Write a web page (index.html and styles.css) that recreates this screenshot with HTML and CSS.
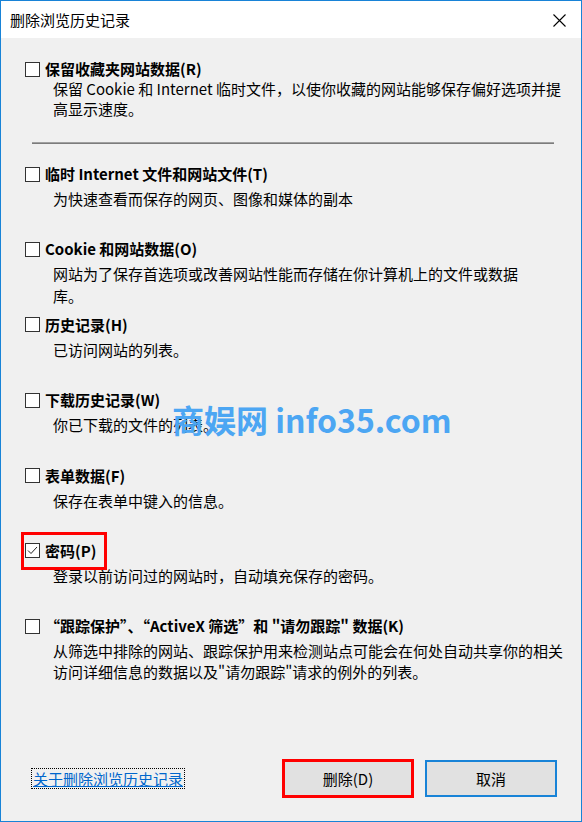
FILE: index.html
```html
<!DOCTYPE html>
<html lang="zh-CN">
<head>
  <meta charset="UTF-8">
  <meta name="viewport" content="width=device-width, initial-scale=1.0">
  <title>删除浏览历史记录</title>
  <link rel="stylesheet" href="styles.css">
</head>
<body>
  <div class="dialog">
    <div class="titlebar">
      <span class="title">删除浏览历史记录</span>
      <svg class="close" width="13" height="13" viewBox="0 0 13 13">
        <path d="M0.5 0.5 L12.5 12.5 M12.5 0.5 L0.5 12.5" stroke="#000" stroke-width="1.1" fill="none"/>
      </svg>
    </div>

    <div class="content">
      <div class="keep">
        <div class="row">
          <span class="box"></span>
          <span class="label">保留收藏夹网站数据(R)</span>
        </div>
        <p class="desc">保留 Cookie 和 Internet 临时文件，以使你收藏的网站能够保存偏好选项并提高显示速度。</p>
      </div>

      <div class="sep"></div>

      <div class="item">
        <div class="row">
          <span class="box"></span>
          <span class="label">临时 Internet 文件和网站文件(T)</span>
        </div>
        <p class="desc">为快速查看而保存的网页、图像和媒体的副本</p>
      </div>
      <div class="item">
        <div class="row">
          <span class="box"></span>
          <span class="label">Cookie 和网站数据(O)</span>
        </div>
        <p class="desc narrow">网站为了保存首选项或改善网站性能而存储在你计算机上的文件或数据库。</p>
      </div>
      <div class="item">
        <div class="row">
          <span class="box"></span>
          <span class="label">历史记录(H)</span>
        </div>
        <p class="desc">已访问网站的列表。</p>
      </div>
      <div class="item">
        <div class="row">
          <span class="box"></span>
          <span class="label">下载历史记录(W)</span>
        </div>
        <p class="desc">你已下载的文件的列表。</p>
      </div>
      <div class="item">
        <div class="row">
          <span class="box"></span>
          <span class="label">表单数据(F)</span>
        </div>
        <p class="desc">保存在表单中键入的信息。</p>
      </div>
      <div class="item">
        <div class="row marked">
          <span class="box">
            <svg width="13" height="13" viewBox="0 0 13 13">
              <path d="M2 6.5 L5 9.5 L11 3" stroke="#222" stroke-width="1" fill="none"/>
            </svg>
          </span>
          <span class="label">密码(P)</span>
        </div>
        <p class="desc">登录以前访问过的网站时，自动填充保存的密码。</p>
      </div>
      <div class="item">
        <div class="row">
          <span class="box"></span>
          <span class="label">“跟踪保护”、“ActiveX 筛选”和 "请勿跟踪" 数据(K)</span>
        </div>
        <p class="desc">从筛选中排除的网站、跟踪保护用来检测站点可能会在何处自动共享你的相关访问详细信息的数据以及"请勿跟踪"请求的例外的列表。</p>
      </div>
    </div>

    <div class="footer">
      <a class="about" href="#">关于删除浏览历史记录</a>
      <div class="buttons">
        <button class="btn btn-delete">删除(D)</button>
        <button class="btn btn-cancel">取消</button>
      </div>
    </div>

    <div class="watermark">商娱网 info35.com</div>
  </div>
</body>
</html>
```

FILE: styles.css
```css
*{
  margin: 0;
  padding: 0;
  box-sizing: border-box;
}
body{
  background: #f0f0f0;
  font-family: "Noto Sans CJK SC", "Liberation Sans", sans-serif;
  color: #000;
}
.dialog{
  position: relative;
  width: 582px;
  height: 822px;
  border: 1px solid #1883d7;
  background: #f0f0f0;
  display: flex;
  flex-direction: column;
}
.titlebar{
  height: 37px;
  background: #fff;
  display: flex;
  align-items: center;
  justify-content: space-between;
  padding: 0 15px 0 9px;
}
.title{
  font-size: 15px;
  line-height: 20px;
}
.close{
  margin-top: 1px;
}
.content{
  flex: 1;
  padding: 20px 0 0 24px;
}
.row{
  display: flex;
  align-items: center;
  height: 22px;
}
.box{
  flex: none;
  width: 15px;
  height: 15px;
  border: 1px solid #333;
  background: #fff;
  margin-right: 5px;
  display: flex;
  align-items: center;
  justify-content: center;
}
.box svg{
  display: block;
  flex: none;
}
.label{
  font-size: 15px;
  font-weight: bold;
  line-height: 22px;
}
.desc{
  font-size: 15px;
  line-height: 21px;
  padding-left: 28px;
  padding-right: 10px;
}
.keep .desc{
  margin-top: -1px;
  line-height: 20px;
}
.desc.narrow{
  padding-right: 50px;
  line-height: 22px;
}
.item .desc{
  margin-top: 3px;
}
.sep{
  margin: 23px 27px 19px 7px;
  height: 2px;
  border-top: 1px solid #a0a0a0;
  border-bottom: 1px solid #7c7c7c;
}
.item{
  height: 75.4px;
}
.marked{
  position: relative;
}
.marked::after{
  content: "";
  position: absolute;
  left: -4px;
  top: -8px;
  width: 80px;
  height: 32px;
  border: 3px solid #ff0000;
}
.footer{
  height: 86px;
  display: flex;
  align-items: center;
  justify-content: space-between;
  padding: 0 24px 0 31px;
}
.about{
  font-size: 15px;
  line-height: 19px;
  color: #0066cc;
  text-decoration: underline;
  outline: 1px dotted #000;
  padding: 0 1px;
}
.buttons{
  display: flex;
  align-items: center;
  gap: 11px;
}
.btn{
  width: 132px;
  font-family: inherit;
  font-size: 15px;
  background: #e1e1e1;
  color: #000;
}
.btn-delete{
  height: 39px;
  border: 3px solid #ff0000;
}
.btn-cancel{
  height: 37px;
  border: 2px solid #1883d7;
}
.watermark{
  position: absolute;
  left: 171px;
  top: 398px;
  font-size: 32px;
  font-weight: bold;
  color: #4ca6f3;
  line-height: 40px;
  white-space: nowrap;
}
```
